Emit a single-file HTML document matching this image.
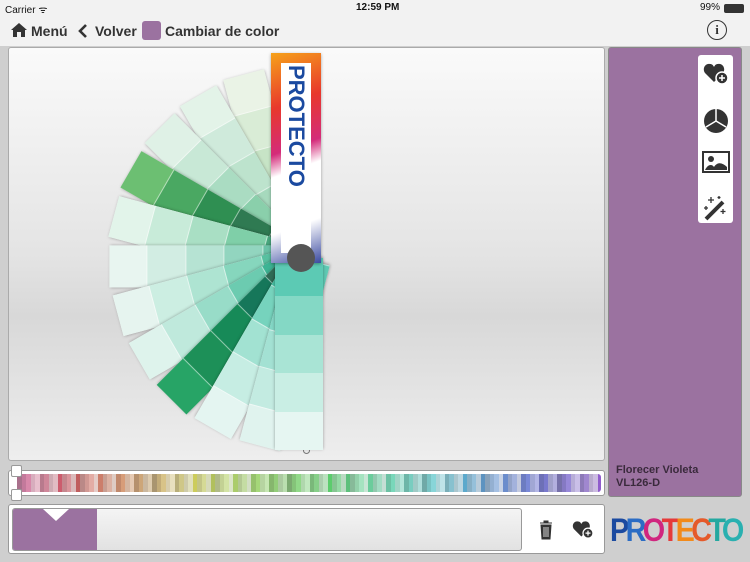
<!DOCTYPE html>
<html><head><meta charset="utf-8"><style>
*{box-sizing:border-box;margin:0;padding:0}
body{width:750px;height:562px;overflow:hidden;background:#cfcfcf;font-family:"Liberation Sans",sans-serif;position:relative}
.status{position:absolute;top:0;left:0;width:750px;height:16px;background:#f2f2f2;font-size:10px;color:#111}
.nav{position:absolute;top:16px;left:0;width:750px;height:30px;background:#f2f2f2;font-size:14px;color:#333;font-weight:bold}
.main{position:absolute;left:8px;top:47px;width:597px;height:414px;border:1px solid #aaa;border-radius:3px;background:linear-gradient(#fafafa,#e4e4e4 50%,#d8d8d8 65%,#eee);overflow:hidden}
.side{position:absolute;left:608px;top:47px;width:134px;height:450px;background:#9b72a0;border-radius:3px;border:1px solid #888}
.tools{position:absolute;left:698px;top:55px;width:35px;height:168px;background:#fff;border-radius:3px}
.strip{position:absolute;width:42px;height:192px;transform-origin:70% 100%;box-shadow:0 1px 3px rgba(0,0,0,.35);display:flex;flex-direction:column;background:#eee}
.strip div{flex:1}
.bar{position:absolute;left:8px;top:470px;width:597px;height:26px;background:#fff;border:1px solid #999;border-radius:3px}
.bottom{position:absolute;left:8px;top:504px;width:597px;height:50px;background:#fff;border:1px solid #999;border-radius:3px}
</style></head><body>
<div class="status"><span style="position:absolute;left:5px;top:2px">Carrier ᯤ</span><span style="position:absolute;left:356px;top:2px;font-weight:bold">12:59 PM</span><span style="position:absolute;right:30px;top:2px">99%</span><span style="position:absolute;right:6px;top:4px;width:20px;height:9px;border:1px solid #333;border-radius:2px;background:#333"></span></div>
<div class="nav">
<svg style="position:absolute;left:11px;top:6px" width="16" height="16" viewBox="0 0 16 16"><path d="M8 1L0 8h2v7h4v-5h4v5h4V8h2z" fill="#333"/></svg>
<span style="position:absolute;left:31px;top:7px">Menú</span>
<svg style="position:absolute;left:78px;top:8px" width="10" height="14" viewBox="0 0 10 14"><path d="M8 1L2 7l6 6" stroke="#333" stroke-width="2.6" fill="none"/></svg>
<span style="position:absolute;left:95px;top:7px">Volver</span>
<span style="position:absolute;left:142px;top:5px;width:19px;height:19px;background:#9b72a0;border-radius:3px"></span>
<span style="position:absolute;left:165px;top:7px">Cambiar de color</span>
<span style="position:absolute;left:707px;top:4px;width:20px;height:20px;border:1.5px solid #333;border-radius:50%;text-align:center;font-size:13px;line-height:17px;font-family:'Liberation Serif',serif">i</span>
</div>
<div class="main" id="main"><div style="position:absolute;left:294px;top:399px;width:7px;height:7px;border:1px solid #777;border-radius:50%"></div></div>
<div class="side"><div style="position:absolute;left:7px;top:416px;color:#3a2a3c;font-size:11px;font-weight:bold;line-height:13px">Florecer Violeta<br>VL126-D</div></div>
<div class="tools">
<svg style="position:absolute;left:5px;top:6px" width="26" height="24" viewBox="0 0 26 24"><path d="M11 21L2 12C-1 8 2 2 7 3c2 0 3 1 4 3 1-2 2-3 4-3 5-1 8 5 5 9z" fill="#333"/><circle cx="19" cy="17" r="6" fill="#333" stroke="#fff" stroke-width="1.5"/><path d="M16 17h6M19 14v6" stroke="#fff" stroke-width="1.5"/></svg>
<svg style="position:absolute;left:5px;top:53px" width="26" height="26" viewBox="0 0 26 26"><circle cx="13" cy="13" r="12" fill="#333"/><path d="M13 13V1M13 13L3 19M13 13l10 6" stroke="#fff" stroke-width="1.5"/></svg>
<svg style="position:absolute;left:4px;top:96px" width="28" height="22" viewBox="0 0 28 22"><rect x="1" y="1" width="26" height="20" fill="none" stroke="#333" stroke-width="2"/><circle cx="9" cy="8" r="3" fill="#333"/><path d="M3 19c3-6 7-6 9-3 3-5 8-5 13 0v3z" fill="#333"/></svg>
<svg style="position:absolute;left:5px;top:140px" width="26" height="26" viewBox="0 0 26 26"><path d="M3 24L20 7" stroke="#333" stroke-width="4"/><path d="M8 2v6M5 5h6M20 14v5M17.5 16.5h5M3 11v4M1 13h4M16 1v3M14.5 2.5h3" stroke="#333" stroke-width="1.3"/></svg>
</div>
<div class="bar"><div id="stripes" style="position:absolute;left:8px;top:3px;right:3px;bottom:3px;display:flex;border-radius:3px;overflow:hidden"></div>
<div style="position:absolute;left:2px;top:-6px;width:11px;height:12px;background:#fff;border:1px solid #999;border-radius:2px"></div>
<div style="position:absolute;left:2px;top:18px;width:11px;height:12px;background:#fff;border:1px solid #999;border-radius:2px"></div></div>
<div class="bottom">
<div style="position:absolute;left:3px;top:3px;width:510px;height:43px;border:1px solid #999;border-radius:3px;background:linear-gradient(#f4f4f4,#e2e2e2);overflow:hidden"><div style="position:absolute;left:0;top:0;width:84px;height:43px;background:#9b72a0"></div><div style="position:absolute;left:30px;top:0;border-left:13px solid transparent;border-right:13px solid transparent;border-top:12px solid #fff"></div></div>
<svg style="position:absolute;left:530px;top:15px" width="14" height="20" viewBox="0 0 14 20"><path d="M1 3h12M5 3V1h4v2M2 5h10l-1 14H3z" fill="#333" stroke="#333"/><path d="M5 7v10M7 7v10M9 7v10" stroke="#fff" stroke-width=".8"/></svg>
<svg style="position:absolute;left:563px;top:14px" width="22" height="20" viewBox="0 0 26 24"><path d="M11 21L2 12C-1 8 2 2 7 3c2 0 3 1 4 3 1-2 2-3 4-3 5-1 8 5 5 9z" fill="#333"/><circle cx="19" cy="17" r="6" fill="#333" stroke="#fff" stroke-width="1.5"/><path d="M16 17h6M19 14v6" stroke="#fff" stroke-width="1.5"/></svg>
</div>
<div style="position:absolute;left:610px;top:513px;font-size:32px;font-weight:bold;letter-spacing:-4px;transform:scaleX(.9);transform-origin:0 0;line-height:34px"><span style="color:#1b4aa0">P</span><span style="color:#2b6cc4">R</span><span style="color:#d0267f">O</span><span style="color:#e53a3a">T</span><span style="color:#f28a1a">E</span><span style="color:#e55a2a">C</span><span style="color:#24a8a0">T</span><span style="color:#2ab0b0">O</span></div>
<script>
var s=document.getElementById('stripes');
for(var i=0;i<130;i++){var h=(i/130*300+330)%360;var l=55+((i*37)%30);var d=document.createElement('div');d.style.flex='1';d.style.background='hsl('+h+','+(25+(i*13)%30)+'%,'+l+'%)';s.appendChild(d);}
var m=document.getElementById('main');
var px=292,py=210;
var pal=[["#eaf3e6","#d9ecd6","#c7e4c6","#b2dcb4","#9ccfa2"],["#e3f3e8","#cfeadb","#bde3cd","#a6d9bd","#8fcdac"],["#dff1e6","#c8e8d6","#aadcc2","#8acfab","#66bd91"],["#6cbf72","#4aa862","#2f8f52","#2f7a52","#3e6a52"],["#e2f4ea","#c8ebd9","#a9dfc4","#7fcfa8","#4aa87f"],["#e8f5f0","#d2ede3","#b6e3d3","#92d5bf","#6bc2a7"],["#e6f4ef","#cceee2","#aee4d2","#86d6bd","#58c0a0"],["#def3ec","#bfe9dc","#98dcc8","#6ccbb0","#3db494"],["#27a466","#1d9058","#178a58","#16775a","#2f6a55"],["#e4f5f1","#c6ede3","#a2e2d2","#76d3bd","#47bfa3"],["#e0f3ee","#c3ebe1","#a3e1d3","#83d6c5","#5fc9b3"]];
for(var k=0;k<11;k++){var a=-15-k*15;var e=document.createElement('div');e.className='strip';e.style.left=(px-29)+'px';e.style.top=(py-192)+'px';e.style.transform='rotate('+a+'deg)';e.innerHTML=pal[k].map(function(c){return '<div style="background:'+c+';border-bottom:1px solid rgba(255,255,255,.5)"></div>'}).join('');m.appendChild(e);}
var b=document.createElement('div');b.className='strip';b.style.left=(px-26)+'px';b.style.top=(py-192)+'px';b.style.width='48px';b.style.transformOrigin='50% 100%';b.style.transform='rotate(180deg)';b.innerHTML=["#e6f6f2","#c9eee4","#a9e4d5","#84d8c5","#5ccab4"].map(function(c){return '<div style="background:'+c+'"></div>'}).join('');m.appendChild(b);
var t=document.createElement('div');t.className='strip';t.style.left=(px-30)+'px';t.style.top=(py-205)+'px';t.style.width='50px';t.style.height='210px';t.style.background='linear-gradient(160deg,#f6a21a,#e8382c 25%,#d42c7a 45%,#fff 55%,#fff 80%,#3a4aa0)';t.innerHTML='<div style="writing-mode:vertical-rl;color:#1b4aa0;font-weight:bold;font-size:22px;margin:10px auto;background:#fff;padding:2px">PROTECTO</div>';m.appendChild(t);
var c=document.createElement('div');c.style.cssText='position:absolute;left:'+(px-14)+'px;top:'+(py-14)+'px;width:28px;height:28px;border-radius:50%;background:#555';m.appendChild(c);
</script>
</body></html>
